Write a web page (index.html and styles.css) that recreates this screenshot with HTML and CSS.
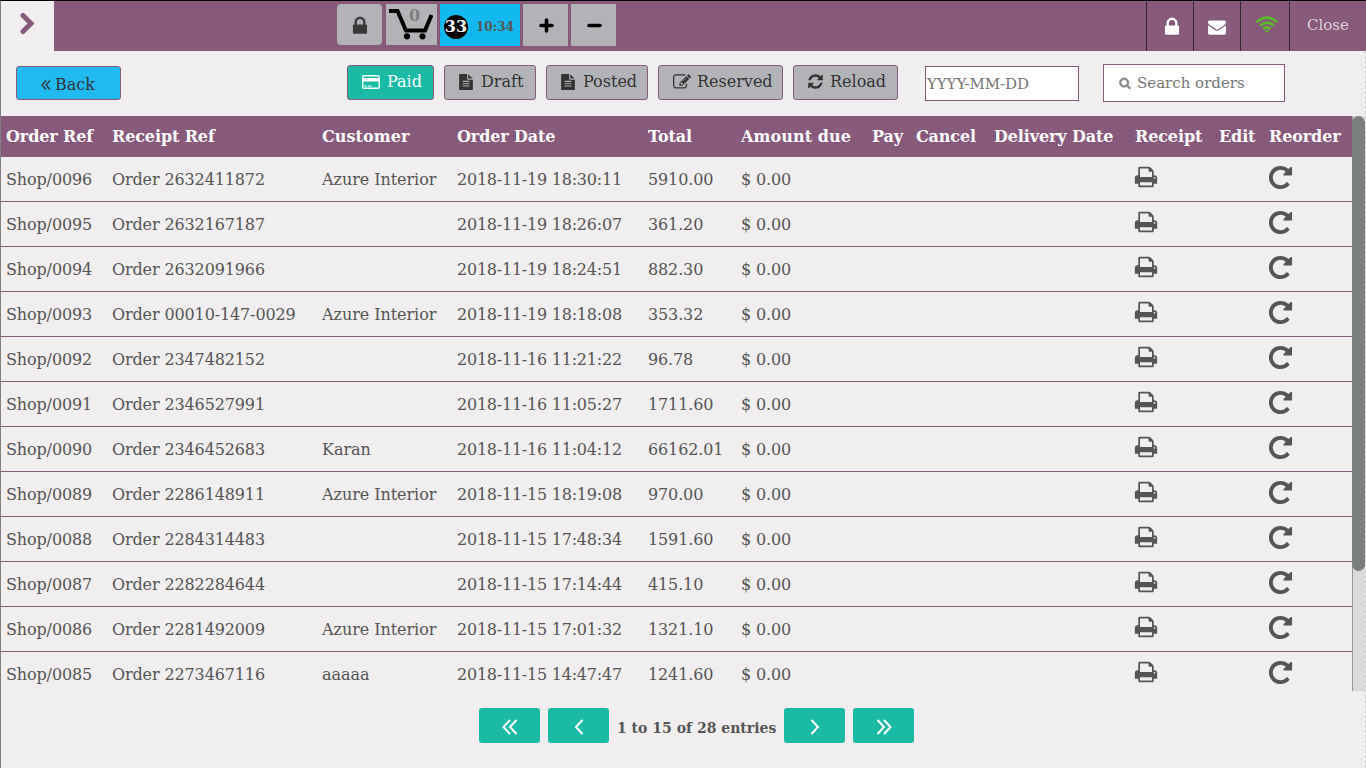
FILE: index.html
```html
<!DOCTYPE html>
<html lang="en">
<head>
<meta charset="utf-8">
<title>Orders</title>
<link rel="stylesheet" href="styles.css">
</head>
<body>
<svg class="defs">
<symbol id="lock" viewBox="0 0 1792 1792"><path d="M640 768h512v-192q0-106-75-181t-181-75-181 75-75 181v192zm832 96v576q0 40-28 68t-68 28h-960q-40 0-68-28t-28-68v-576q0-40 28-68t68-28h32v-192q0-184 132-316t316-132 316 132 132 316v192h32q40 0 68 28t28 68z"/></symbol>
<symbol id="mail" viewBox="0 0 1792 1792"><path d="M1792 710v794q0 66-47 113t-113 47h-1472q-66 0-113-47t-47-113v-794q44 49 101 87 362 246 497 345 57 42 92.500 65.500t94.500 48 110 24.500h2q51 0 110-24.500t94.500-48 92.500-65.500q170-123 498-345 57-39 100-87zm0-294q0 79-49 151t-122 123q-376 261-468 325-10 7-42.500 31t-54 38.500-52 32.500-57.500 27-50 9h-2q-23 0-50-9t-57.500-27-52-32.500-54-38.500-42.500-31q-91-64-262-182.500t-205-142.500q-62-42-117-115.500t-55-136.500q0-78 41.500-130t118.500-52h1472q65 0 112.500 47t47.500 113z"/></symbol>
<symbol id="repeat" viewBox="0 0 1792 1792"><path d="M1664 256v448q0 26-19 45t-45 19h-448q-42 0-59-40-17-39 14-69l138-138q-148-137-349-137-104 0-198.500 40.500t-163.500 109.500-109.500 163.500-40.500 198.500 40.500 198.500 109.500 163.500 163.500 109.500 198.500 40.500q119 0 225-52t179-147q7-10 23-12 15 0 25 9l137 138q9 8 9.500 20.500t-7.500 22.500q-109 132-264 204.500t-327 72.500q-156 0-298-61t-245-164-164-245-61-298 61-298 164-245 245-164 298-61q147 0 284.500 55.500t244.500 156.500l130-129q29-31 70-14 39 17 39 59z"/></symbol>
<symbol id="print" viewBox="0 0 1792 1792"><path d="M448 1536h896v-256h-896v256zm0-640h896v-384h-160q-40 0-68-28t-28-68v-160h-640v640zm1152 64q0-26-19-45t-45-19-45 19-19 45 19 45 45 19 45-19 19-45zm128 0v416q0 13-9.500 22.500t-22.500 9.500h-224v160q0 40-28 68t-68 28h-960q-40 0-68-28t-28-68v-160h-224q-13 0-22.500-9.500t-9.500-22.500v-416q0-79 56.500-135.500t135.500-56.500h64v-544q0-40 28-68t68-28h672q40 0 88 20t76 48l152 152q28 28 48 76t20 88v256h64q79 0 135.500 56.500t56.500 135.500z"/></symbol>
<symbol id="refresh" viewBox="0 0 1792 1792"><path d="M1639 1056q0 5-1 7-64 268-268 434.500t-478 166.500q-146 0-282.500-55t-243.500-157l-129 129q-19 19-45 19t-45-19-19-45v-448q0-26 19-45t45-19h448q26 0 45 19t19 45-19 45l-137 137q71 66 161 102t187 36q134 0 250-65t186-179q11-17 53-117 8-23 30-23h192q13 0 22.500 9.500t9.500 22.500zm25-800v448q0 26-19 45t-45 19h-448q-26 0-45-19t-19-45 19-45l138-138q-148-137-349-137-134 0-250 65t-186 179q-11 17-53 117-8 23-30 23h-199q-13 0-22.500-9.500t-9.500-22.500v-7q65-268 270-434.500t480-166.500q146 0 284 55.500t245 156.500l130-129q19-19 45-19t45 19 19 45z"/></symbol>
<symbol id="edit" viewBox="0 0 1792 1792"><path d="M888 1184l116-116-152-152-116 116v56h96v96h56zm440-720q-16-16-33 1l-350 350q-17 17-1 33t33-1l350-350q17-17 1-33zm80 594v190q0 119-84.500 203.500t-203.500 84.500h-832q-119 0-203.500-84.500t-84.500-203.500v-832q0-119 84.500-203.500t203.500-84.500h832q63 0 117 25 15 7 18 23 3 17-9 29l-49 49q-14 14-32 8-23-6-45-6h-832q-66 0-113 47t-47 113v832q0 66 47 113t113 47h832q66 0 113-47t47-113v-126q0-13 9-22l64-64q15-15 35-7t20 29zm-96-738l288 288-672 672h-288v-288zm444 132l-92 92-288-288 92-92q28-28 68-28t68 28l152 152q28 28 28 68t-28 68z"/></symbol>
<symbol id="file" viewBox="0 0 1792 1792"><path d="M1596 476q14 14 28 36h-472v-472q22 14 36 28zm-476 164h544v1056q0 40-28 68t-68 28h-1344q-40 0-68-28t-28-68v-1600q0-40 28-68t68-28h800v544q0 40 28 68t68 28zm160 736v-64q0-14-9-23t-23-9h-704q-14 0-23 9t-9 23v64q0 14 9 23t23 9h704q14 0 23-9t9-23zm0-256v-64q0-14-9-23t-23-9h-704q-14 0-23 9t-9 23v64q0 14 9 23t23 9h704q14 0 23-9t9-23zm0-256v-64q0-14-9-23t-23-9h-704q-14 0-23 9t-9 23v64q0 14 9 23t23 9h704q14 0 23-9t9-23z"/></symbol>
<symbol id="search" viewBox="0 0 1792 1792"><path d="M1216 832q0-185-131.500-316.500t-316.500-131.500-316.500 131.500-131.500 316.500 131.500 316.500 316.500 131.500 316.500-131.500 131.500-316.500zm512 832q0 52-38 90t-90 38q-54 0-90-38l-343-342q-179 124-399 124-143 0-273.500-55.500t-225-150-150-225-55.500-273.500 55.500-273.500 150-225 225-150 273.500-55.500 273.500 55.500 225 150 150 225 55.500 273.500q0 220-124 399l343 343q37 37 37 90z"/></symbol>
</svg>
<div class="app">
<header class="topbar">
  <div class="expand"><svg width="16" height="22" viewBox="0 0 16 22"><path d="M4 2.500L12 10.500L4 18.500" fill="none" stroke="#875a7b" stroke-width="5" stroke-linecap="round"/></svg></div>
  <div class="tools">
    <div class="tool tool-lock"><svg class="i22"><use href="#lock"/></svg></div>
    <div class="tool tool-cart">
      <svg width="51" height="41" viewBox="0 0 51 41"><path d="M3 7H11.500L20 26.500H39L45.500 11" fill="none" stroke="#000" stroke-width="4"/><circle cx="21" cy="32.300" r="3.100"/><circle cx="36.500" cy="32.300" r="3.100"/></svg>
      <span class="count">0</span>
    </div>
    <div class="tool tool-order"><span class="badge">33</span><span class="time">10:34</span></div>
    <div class="tool tool-plus"><svg width="15" height="15" viewBox="0 0 15 15"><path d="M2 7.500H13M7.500 2V13" stroke="#000" stroke-width="3.600" stroke-linecap="round"/></svg></div>
    <div class="tool tool-minus"><svg width="15" height="15" viewBox="0 0 15 15"><path d="M2 7.500H13" stroke="#000" stroke-width="3.600" stroke-linecap="round"/></svg></div>
  </div>
  <div class="status">
    <div class="st st-lock"><svg class="i22"><use href="#lock"/></svg></div>
    <div class="st st-mail"><svg class="i18"><use href="#mail"/></svg></div>
    <div class="st st-wifi"><svg width="24" height="18" viewBox="0 0 24 18"><g fill="none" stroke="#5cb82c" stroke-width="2.600"><path d="M1.500 6.200Q12-2.800 22.500 6.200M5 9.800Q12 3.500 19 9.800M8.300 13Q12 9.700 15.700 13"/></g><path d="M12 17L9.800 14.800Q12 13.200 14.200 14.800Z" fill="#5cb82c"/></svg></div>
    <div class="st st-close">Close</div>
  </div>
</header>
<div class="filters">
  <div class="btn back"><svg width="10" height="12" viewBox="0 0 10 12"><path d="M5 1.500L1 6L5 10.500M9 1.500L5 6L9 10.500" fill="none" stroke="#333" stroke-width="1.300"/></svg><span>Back</span></div>
  <div class="btn paid"><svg width="18" height="14" viewBox="0 0 18 14"><rect x=".75" y=".75" width="16.500" height="12.500" rx="1" fill="none" stroke="#fff" stroke-width="1.300"/><path d="M1 3h16v3.500H1zM2.500 10.500h2.500v1H2.500zM6 10.500h3.500v1H6z" fill="#fff"/></svg><span>Paid</span></div>
  <div class="btn draft"><svg class="i16"><use href="#file"/></svg><span>Draft</span></div>
  <div class="btn posted"><svg class="i16"><use href="#file"/></svg><span>Posted</span></div>
  <div class="btn reserved"><svg class="i18"><use href="#edit"/></svg><span>Reserved</span></div>
  <div class="btn reload"><svg class="i17"><use href="#refresh"/></svg><span>Reload</span></div>
  <div class="field date">YYYY-MM-DD</div>
  <div class="field search"><svg class="i12"><use href="#search"/></svg><span>Search orders</span></div>
</div>
<main class="list">
<div class="rows">
  <div class="row head"><span>Order Ref</span><span>Receipt Ref</span><span>Customer</span><span>Order Date</span><span>Total</span><span>Amount due</span><span>Pay</span><span>Cancel</span><span>Delivery Date</span><span>Receipt</span><span>Edit</span><span>Reorder</span></div>
  <div class="row"><span>Shop/0096</span><span>Order 2632411872</span><span>Azure Interior</span><span>2018-11-19 18:30:11</span><span>5910.00</span><span>$ 0.00</span><svg class="pr"><use href="#print"/></svg><svg class="rp"><use href="#repeat"/></svg></div>
  <div class="row"><span>Shop/0095</span><span>Order 2632167187</span><span></span><span>2018-11-19 18:26:07</span><span>361.20</span><span>$ 0.00</span><svg class="pr"><use href="#print"/></svg><svg class="rp"><use href="#repeat"/></svg></div>
  <div class="row"><span>Shop/0094</span><span>Order 2632091966</span><span></span><span>2018-11-19 18:24:51</span><span>882.30</span><span>$ 0.00</span><svg class="pr"><use href="#print"/></svg><svg class="rp"><use href="#repeat"/></svg></div>
  <div class="row"><span>Shop/0093</span><span>Order 00010-147-0029</span><span>Azure Interior</span><span>2018-11-19 18:18:08</span><span>353.32</span><span>$ 0.00</span><svg class="pr"><use href="#print"/></svg><svg class="rp"><use href="#repeat"/></svg></div>
  <div class="row"><span>Shop/0092</span><span>Order 2347482152</span><span></span><span>2018-11-16 11:21:22</span><span>96.78</span><span>$ 0.00</span><svg class="pr"><use href="#print"/></svg><svg class="rp"><use href="#repeat"/></svg></div>
  <div class="row"><span>Shop/0091</span><span>Order 2346527991</span><span></span><span>2018-11-16 11:05:27</span><span>1711.60</span><span>$ 0.00</span><svg class="pr"><use href="#print"/></svg><svg class="rp"><use href="#repeat"/></svg></div>
  <div class="row"><span>Shop/0090</span><span>Order 2346452683</span><span>Karan</span><span>2018-11-16 11:04:12</span><span>66162.01</span><span>$ 0.00</span><svg class="pr"><use href="#print"/></svg><svg class="rp"><use href="#repeat"/></svg></div>
  <div class="row"><span>Shop/0089</span><span>Order 2286148911</span><span>Azure Interior</span><span>2018-11-15 18:19:08</span><span>970.00</span><span>$ 0.00</span><svg class="pr"><use href="#print"/></svg><svg class="rp"><use href="#repeat"/></svg></div>
  <div class="row"><span>Shop/0088</span><span>Order 2284314483</span><span></span><span>2018-11-15 17:48:34</span><span>1591.60</span><span>$ 0.00</span><svg class="pr"><use href="#print"/></svg><svg class="rp"><use href="#repeat"/></svg></div>
  <div class="row"><span>Shop/0087</span><span>Order 2282284644</span><span></span><span>2018-11-15 17:14:44</span><span>415.10</span><span>$ 0.00</span><svg class="pr"><use href="#print"/></svg><svg class="rp"><use href="#repeat"/></svg></div>
  <div class="row"><span>Shop/0086</span><span>Order 2281492009</span><span>Azure Interior</span><span>2018-11-15 17:01:32</span><span>1321.10</span><span>$ 0.00</span><svg class="pr"><use href="#print"/></svg><svg class="rp"><use href="#repeat"/></svg></div>
  <div class="row"><span>Shop/0085</span><span>Order 2273467116</span><span>aaaaa</span><span>2018-11-15 14:47:47</span><span>1241.60</span><span>$ 0.00</span><svg class="pr"><use href="#print"/></svg><svg class="rp"><use href="#repeat"/></svg></div>
</div>
<div class="scroll"><div class="thumb"></div></div>
</main>
<footer class="pager">
  <div class="pg"><svg width="16" height="16" viewBox="0 0 16 16"><path d="M8 1L1.500 8L8 15M14.500 1L8 8L14.500 15"/></svg></div>
  <div class="pg"><svg width="16" height="16" viewBox="0 0 16 16"><path d="M11.500 1L5 8L11.500 15"/></svg></div>
  <span class="info">1 to 15 of 28 entries</span>
  <div class="pg"><svg width="16" height="16" viewBox="0 0 16 16"><path d="M4.500 1L11 8L4.500 15"/></svg></div>
  <div class="pg"><svg width="16" height="16" viewBox="0 0 16 16"><path d="M1.500 1L8 8L1.500 15M8 1L14.500 8L8 15"/></svg></div>
</footer>
</div>
</body>
</html>
```
FILE: styles.css
```css
* { box-sizing: border-box; }
body { margin: 0; font: 16px/20px "DejaVu Serif", serif; color: #555; background: #f0eeee; }
.defs { display: none; }
svg { flex: none; display: block; }
.app { width: 1366px; height: 768px; overflow: hidden; border-top: 1px solid #000; border-left: 1px solid #808080; background: #f0eeee; position: relative; }
.app::after { content: ""; position: absolute; right: 0; top: 50px; bottom: 0; border-right: 1px dashed #d0d0d0; }
.topbar { height: 50px; background: #875a7b; display: flex; }
.expand { width: 53px; background: #f0eeee; padding: 12px 0 0 18px; }
.tools { display: flex; align-items: flex-start; padding-top: 3px; margin-left: 283px; }
.tool { background: #b2b3b7; display: flex; align-items: center; justify-content: center; height: 42px; }
.tool-lock { width: 45px; height: 41px; border-radius: 4px; fill: #393939; margin-right: 4px; padding: 2px 0 0 1px; }
.tool-cart { width: 51px; height: 41px; position: relative; margin-right: 3px; }
.count { position: absolute; left: 23px; top: 2px; font-weight: bold; font-size: 16px; color: #808080; }
.tool-order { width: 80px; background: #12b9f0; margin-right: 3px; justify-content: flex-start; padding: 4px 0 0 4px; }
.badge { width: 24px; height: 24px; border-radius: 50%; background: #000; color: #fff; font-weight: bold; display: flex; justify-content: center; align-items: center; }
.time { margin-left: 8px; font-size: 12px; font-weight: bold; }
.tool-plus, .tool-minus { width: 45px; margin-right: 3px; padding: 1px 0 0 1px; }
.status { display: flex; margin-left: auto; }
.st { border-left: 1px solid #2b2b2b; display: flex; align-items: center; justify-content: center; fill: #fff; }
.st-lock { width: 47px; padding: 1px 0 0 4px; }
.st-mail { width: 47px; padding-top: 1px; }
.st-wifi { width: 49px; padding: 0 0 3px 4px; }
.st-close { width: 77px; color: #dcd0d8; font-size: 15px; padding-bottom: 2px; }
.i12 { width: 12px; height: 12px; }
.i16 { width: 16px; height: 16px; }
.i17 { width: 17px; height: 17px; }
.i18 { width: 18px; height: 18px; }
.i22 { width: 22px; height: 22px; }
.filters { height: 65px; display: flex; align-items: flex-start; padding: 14px 0 0 15px; }
.btn { height: 35px; border: 1px solid #875a7b; border-radius: 3px; background: #b2b3b7; color: #333; fill: #333; display: flex; align-items: center; padding: 0 0 2px 14px; gap: 8px; margin-right: 10px; }
.back { width: 105px; height: 34px; margin: 1px 226px 0 0; background: #21baf0; padding: 3px 0 0 24px; gap: 4px; }
.paid { width: 87px; background: #1abaa5; color: #fff; gap: 7px; }
.draft { width: 92px; padding-left: 13px; gap: 7px; }
.posted { width: 102px; padding-left: 13px; gap: 7px; }
.reserved { width: 125px; gap: 6px; }
.reload { width: 105px; margin-right: 27px; padding-left: 13px; gap: 6px; }
.field { border: 1px solid #875a7b; background: #fff; color: #757575; font-size: 15px; display: flex; align-items: center; }
.date { width: 154px; height: 35px; margin: 1px 24px 0 0; padding-left: 1px; letter-spacing: -.1px; }
.search { width: 182px; height: 38px; margin-top: -1px; padding-left: 15px; gap: 6px; fill: #888; }
.search svg { stroke: #888; stroke-width: 90px; }
.list { height: 575px; display: flex; overflow: hidden; }
.rows { width: 1351px; }
.row { display: grid; grid-template-columns: 106px 210px 135px 191px 93px 131px 44px 78px 141px 84px 50px 88px; height: 45px; border-bottom: 1px solid #875a7b; align-items: center; white-space: nowrap; padding-left: 5px; letter-spacing: -.13px; }
.row span { padding-top: 2px; }
.row span:nth-child(3) { letter-spacing: -.05px; }
.row span:nth-child(4) { letter-spacing: -.23px; }
.head { height: 41px; background: #875a7b; color: #fff; font-weight: bold; border: 0; }
.row.head span { padding-top: 0; letter-spacing: -.12px; }
.row.head span:nth-child(3), .row.head span:nth-child(6) { letter-spacing: .08px; }
.pr { grid-column: 10; width: 24px; height: 24px; fill: #555; margin: 0 0 5px -1px; }
.rp { grid-column: 12; width: 27px; height: 27px; fill: #555; margin: 0 0 4px -2px; }
.scroll { width: 13px; background: #dadada; border-left: 1px solid #999; }
.thumb { height: 455px; width: 13px; margin-left: -1px; border-radius: 7px; background: #7b7f7f; }
.pager { display: flex; justify-content: flex-start; padding: 17px 0 0 478px; gap: 8px; }
.pg { width: 61px; height: 35px; border-radius: 3px; background: #1abaa5; display: flex; align-items: center; justify-content: center; padding-top: 3px; }
.pg path { fill: none; stroke: #fff; stroke-width: 2; }
.info { width: 159px; font-size: 14px; font-weight: bold; line-height: 40px; white-space: nowrap; }
```
